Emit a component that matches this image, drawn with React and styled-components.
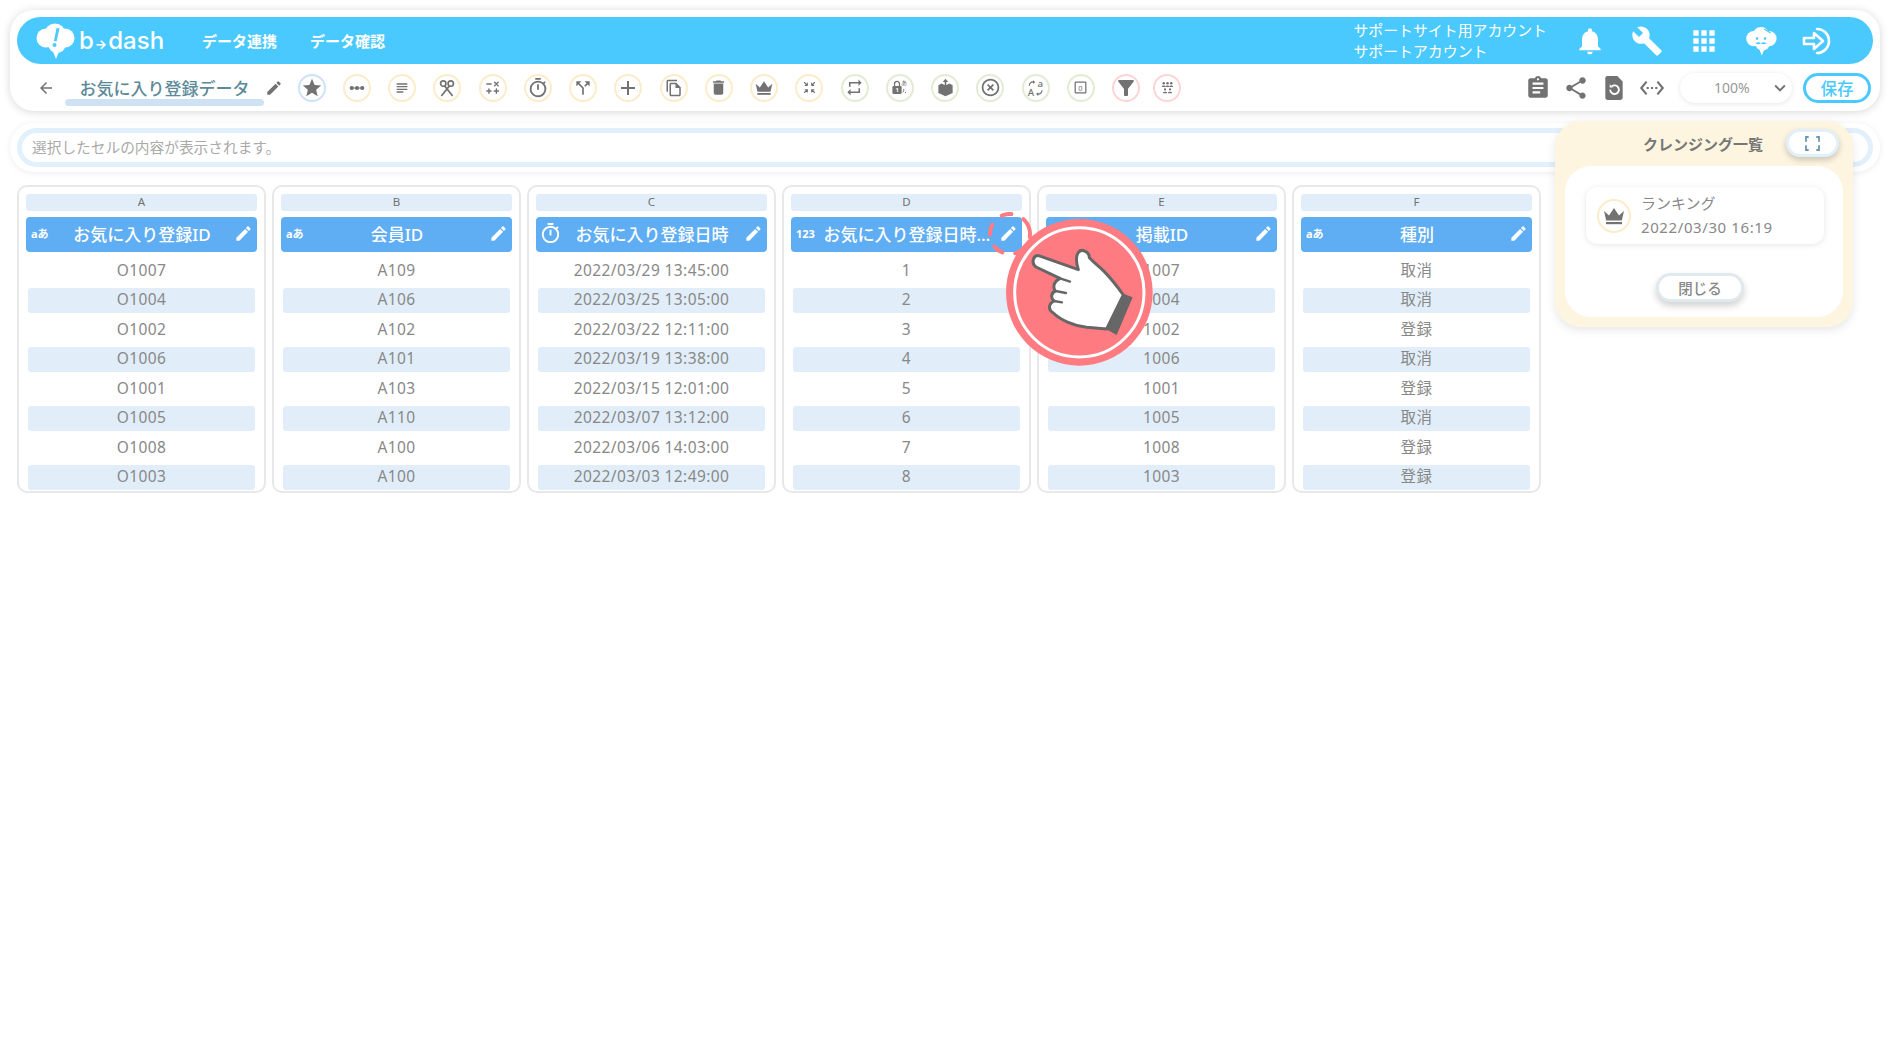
import React from 'react';
import styled, { createGlobalStyle } from 'styled-components';
import {
  MdAdd,
  MdApps,
  MdArrowBack,
  MdAssignment,
  MdBuild,
  MdCallSplit,
  MdDelete,
  MdEdit,
  MdExpandMore,
  MdFilterAlt,
  MdHighlightOff,
  MdNotifications,
  MdOutlineFileCopy,
  MdOutlineTimer,
  MdRepeat,
  MdSettingsEthernet,
  MdShare,
  MdStar,
  MdSubject,
} from 'react-icons/md';

const FONT = '"Noto Sans", "Noto Sans CJK JP", sans-serif';
const BLUE = '#4ac9ff';
const GREY = '#727272';
const RING = { blue: '#cfe2f3', yellow: '#fbeccb', green: '#e4ebd5', red: '#fcd5d5' };

const GlobalStyle = createGlobalStyle`
  html, body {
    margin: 0;
    padding: 0;
    background: #fff;
    font-family: ${FONT};
    overflow: hidden;
  }
`;

const Page = styled.div`
  position: relative;
  box-sizing: border-box;
  height: 1063px;
  padding: 10px;
`;

const TopCard = styled.div`
  padding: 7px 7px 0;
  height: 94px;
  border-radius: 24px;
  background: #fff;
  box-shadow: 0 1px 8px rgba(0, 0, 0, 0.16);
`;

const Bar = styled.header`
  display: flex;
  align-items: center;
  height: 47px;
  padding: 0 0 0 18px;
  border-radius: 24px;
  background: ${BLUE};
  color: #fff;
`;

const Brand = styled.div`
  display: flex;
  align-items: center;
  gap: 4px;
  width: 167px;
`;

const BrandName = styled.span`
  font-family: Inter, sans-serif;
  font-size: 24px;
  font-weight: 500;
  line-height: 1;
  small {
    margin: 0 1px;
    font-size: 13px;
    font-weight: 700;
  }
`;

const NavLink = styled.a`
  margin-right: 33px;
  font-size: 15px;
  font-weight: 700;
  white-space: nowrap;
`;

const Account = styled.div`
  margin-left: auto;
  font-size: 14.9px;
  line-height: 21px;
  white-space: nowrap;
`;

const BarIcons = styled.div`
  display: flex;
  align-items: center;
  margin-left: 27px;
  margin-right: 39px;
  gap: 25px;
  font-size: 32px;
  line-height: 0;
`;

const Toolbar = styled.div`
  display: flex;
  align-items: center;
  height: 47px;
  padding-left: 20px;
`;

const BackLink = styled.span`
  display: flex;
  font-size: 18px;
  color: ${GREY};
`;

const TitleWrap = styled.div`
  position: relative;
  width: 199px;
  margin-left: 10px;
  text-align: center;
`;

const Title = styled.span`
  position: relative;
  font-size: 17px;
  font-weight: 500;
  color: #5d8a99;
`;

const TitleLine = styled.div`
  position: absolute;
  left: 0;
  right: 0;
  bottom: -6px;
  height: 7px;
  border-radius: 4px;
  background: #cfe2f3;
`;

const TitleEdit = styled.span`
  display: flex;
  margin: 0 14.5px 0 1px;
  font-size: 18px;
  color: ${GREY};
`;

const CircleRow = styled.div`
  display: flex;
  align-items: center;
  gap: 17.25px;
`;

const CircleIcon = styled.span`
  box-sizing: border-box;
  display: flex;
  align-items: center;
  justify-content: center;
  flex: none;
  width: 28px;
  height: 28px;
  margin-right: ${(p) => (p.$tight ? '-4px' : '0')};
  border: 2px solid ${(p) => RING[p.$ring]};
  border-radius: 50%;
  color: ${GREY};
  font-size: ${(p) => p.$size || 18}px;
`;

const ToolRight = styled.div`
  display: flex;
  align-items: center;
  margin-left: auto;
  padding-right: 2px;
  color: ${GREY};
`;

const ToolIcon = styled.span`
  display: flex;
  justify-content: center;
  width: 38px;
  font-size: ${(p) => p.$size || 26}px;
`;

const ZoomSelect = styled.div`
  display: flex;
  align-items: center;
  box-sizing: border-box;
  width: 112px;
  height: 30px;
  margin: 0 11px 0 9px;
  padding: 0 1px 0 34px;
  border-radius: 15px;
  background: #fff;
  box-shadow: 0 1px 5px rgba(0, 0, 0, 0.1);
  font-size: 14px;
  color: #999;
  svg {
    margin-left: auto;
    font-size: 22px;
    color: ${GREY};
  }
`;

const SaveButton = styled.button`
  width: 68px;
  height: 30px;
  padding: 0;
  border: 3px solid ${BLUE};
  border-radius: 15px;
  background: #fff;
  color: ${BLUE};
  font-family: ${FONT};
  font-size: 16.5px;
  font-weight: 500;
`;

const CellCard = styled.div`
  margin-top: 12px;
  padding: 5px 7px;
  border-radius: 24px;
  background: #fff;
  box-shadow: 0 1px 6px rgba(0, 0, 0, 0.08);
`;

const CellInput = styled.div`
  box-sizing: border-box;
  height: 39px;
  padding-left: 10px;
  border: 5px solid #e2f0fb;
  border-radius: 20px;
  font-size: 14.7px;
  line-height: 29px;
  color: #aaa;
`;

const Sheet = styled.div`
  display: grid;
  grid-template-columns: repeat(6, 249px);
  gap: 6px;
  margin: 13px 0 0 7px;
`;

const Column = styled.section`
  box-sizing: border-box;
  height: 308px;
  padding: 7px 7px 0;
  border: 2px solid #e8e8e8;
  border-radius: 10px;
`;

const Letter = styled.div`
  height: 17px;
  border-radius: 3px;
  background: #e1eef9;
  font-size: 11.5px;
  line-height: 15px;
  text-align: center;
  color: ${GREY};
`;

const ColumnHead = styled.div`
  display: flex;
  align-items: center;
  box-sizing: border-box;
  height: 35px;
  margin-top: 6px;
  padding: 0 5px 2px;
  border-radius: 4px;
  background: #5fadf3;
  color: #fff;
`;

const TypeMark = styled.span`
  flex: none;
  width: 24px;
  font-size: 11px;
  font-weight: 700;
  line-height: 1;
  svg {
    display: block;
    margin-left: -2px;
    font-size: 23px;
  }
`;

const HeadLabel = styled.span`
  flex: 1;
  min-width: 0;
  overflow: hidden;
  font-size: 17px;
  font-weight: 500;
  text-align: center;
  white-space: nowrap;
`;

const HeadEdit = styled.span`
  display: flex;
  flex: none;
  width: 24px;
  justify-content: flex-end;
  margin-right: -1px;
  font-size: 19px;
`;

const Rows = styled.div`
  display: flex;
  flex-direction: column;
  gap: 4.5px;
  margin: 6.5px 2px 0;
`;

const Row = styled.div`
  box-sizing: border-box;
  height: 25px;
  padding-bottom: 3px;
  border-radius: 3px;
  background: ${(p) => (p.$alt ? '#e1eef9' : 'transparent')};
  font-size: 15.5px;
  letter-spacing: 0.4px;
  line-height: 22px;
  text-align: center;
  color: #888;
`;

const Panel = styled.aside`
  position: absolute;
  top: 121px;
  left: 1555px;
  box-sizing: border-box;
  width: 298px;
  height: 206px;
  padding: 45px 10px 10px;
  border-radius: 26px;
  background: #fdf5e0;
  box-shadow: 0 3px 10px rgba(0, 0, 0, 0.1);
`;

const PanelTitle = styled.div`
  position: absolute;
  top: 12px;
  left: 88px;
  font-size: 15px;
  font-weight: 700;
  line-height: 22px;
  color: #777;
  white-space: nowrap;
`;

const ExpandButton = styled.span`
  position: absolute;
  top: 8px;
  right: 14px;
  display: flex;
  align-items: center;
  justify-content: center;
  box-sizing: border-box;
  width: 53px;
  height: 28px;
  border: 3px solid #e2f0fb;
  border-radius: 14px;
  background: #fff;
  box-shadow: 0 3px 6px rgba(0, 0, 0, 0.2);
`;

const PanelBody = styled.div`
  box-sizing: border-box;
  height: 151px;
  padding: 21px 19px 0 21px;
  border-radius: 26px;
  background: #fff;
`;

const CleansingItem = styled.div`
  display: flex;
  align-items: center;
  gap: 10px;
  box-sizing: border-box;
  height: 57px;
  padding-left: 11px;
  border-radius: 12px;
  background: #fff;
  box-shadow: 0 1px 6px rgba(0, 0, 0, 0.1);
`;

const CrownBadge = styled(CircleIcon)`
  width: 34px;
  height: 34px;
  font-size: 24px;
`;

const ItemText = styled.div`
  margin-top: -2px;
  font-size: 15px;
  line-height: 24px;
  color: #888;
  white-space: nowrap;
`;

const ItemDate = styled.span`
  letter-spacing: 0.6px;
`;

const CloseButton = styled.button`
  display: block;
  box-sizing: border-box;
  width: 88px;
  height: 29px;
  margin: 29px 0 0 70px;
  padding: 0;
  border: 3px solid #dfe9ee;
  border-radius: 15px;
  background: #fff;
  box-shadow: 0 4px 7px rgba(0, 0, 0, 0.18);
  font-family: ${FONT};
  font-size: 14.5px;
  font-weight: 500;
  color: #888;
`;

const HandOverlay = styled.svg`
  position: absolute;
  top: 219px;
  left: 1006px;
  width: 147px;
  height: 147px;
`;

const DashRing = styled.svg`
  position: absolute;
  top: 211px;
  left: 987px;
  width: 46px;
  height: 46px;
`;

const Svg = ({ children, fill = 'none', stroke = 'currentColor', sw = 2 }) => (
  <svg width="1em" height="1em" viewBox="0 0 24 24" fill={fill} stroke={stroke} strokeWidth={sw} strokeLinecap="round" strokeLinejoin="round">
    {children}
  </svg>
);

const Cloud = ({ width, height, face }) => (
  <svg width={width} height={height} viewBox="0 0 40 36">
    <g fill="#fff">
      <circle cx="11" cy="15" r="9.5" />
      <circle cx="20" cy="11" r="10.5" />
      <circle cx="30" cy="15" r="9.5" />
      <circle cx="22" cy="21" r="9" />
      <path d="M17 26l4 10 4-10z" />
    </g>
    {face ? (
      <g>
        <circle cx="15" cy="15" r="1.6" fill={BLUE} />
        <circle cx="25" cy="15" r="1.6" fill={BLUE} />
        <path d="M13 21q4-3 7 0 3-3 7 0-4 2-7 0-3 2-7 0z" fill={BLUE} />
        <path d="M24 3l8 5" stroke={BLUE} strokeWidth="1.4" />
      </g>
    ) : (
      <g fill={BLUE}>
        <path d="M21.5 5l3 .5-3 13-2.5-.4z" />
        <circle cx="19.5" cy="22" r="2" />
      </g>
    )}
  </svg>
);

const SignInIcon = () => (
  <svg width="32" height="32" viewBox="0 0 32 32" fill="none" stroke="#fff" strokeWidth="2.6" strokeLinejoin="round" strokeLinecap="round">
    <path d="M15 4a12 12 0 1 1 0 24" />
    <path d="M2 13h10V8l9 8-9 8v-5H2z" />
  </svg>
);

const RestoreDoc = () => (
  <svg width="1em" height="1em" viewBox="0 0 24 24">
    <path d="M6 1h9l5 5v15a2 2 0 0 1-2 2H6a2 2 0 0 1-2-2V3a2 2 0 0 1 2-2z" fill={GREY} />
    <path d="M8.5 13.5a4 4 0 1 0 1.4-3" fill="none" stroke="#fff" strokeWidth="1.7" />
    <path d="M8 8.5v3h3z" fill="#fff" />
  </svg>
);

const Crown = () => (
  <svg width="1em" height="1em" viewBox="0 0 24 24" fill="currentColor">
    <path d="M2 7l5 4.5L12 4l5 7.5L22 7l-2.2 9.5H4.2z" />
    <rect x="4" y="18" width="16" height="2.2" />
  </svg>
);

const CommitDots = () => (
  <Svg sw={1.6}>
    <path d="M4 12h16" />
    <g fill="currentColor">
      <circle cx="5" cy="12" r="2" />
      <circle cx="12" cy="12" r="2" />
      <circle cx="19" cy="12" r="2" />
    </g>
  </Svg>
);

const Scissors = () => (
  <Svg sw={2.2}>
    <circle cx="7" cy="6" r="3.6" />
    <circle cx="17" cy="6" r="3.6" />
    <path d="M9 9.5L19 22M15 9.5L5 22" />
  </Svg>
);

const CalcMarks = () => (
  <Svg sw={2}>
    <path d="M4 7h6M15 4.5l5 5M20 4.5l-5 5M4 17h6M7 14v6M14.5 17h6M17.5 14v6" />
  </Svg>
);

const CompressArrows = () => (
  <Svg sw={1.8}>
    <path d="M4 4l4.5 4.5M8.5 5v3.5H5M20 4l-4.5 4.5M15.5 5v3.5H19M4 20l4.5-4.5M8.5 19v-3.5H5M20 20l-4.5-4.5M15.5 19v-3.5H19" />
  </Svg>
);

const LockNumber = () => (
  <svg width="1em" height="1em" viewBox="0 0 24 24">
    <path d="M5 10V7a3.5 3.5 0 0 1 7 0v3" fill="none" stroke="currentColor" strokeWidth="1.8" />
    <rect x="2" y="10" width="13" height="11" rx="1.5" fill="currentColor" />
    <text x="8.5" y="19" textAnchor="middle" fontSize="8" fontWeight="700" fill="#fff">1</text>
    <text x="18.5" y="9" textAnchor="middle" fontSize="8" fill="currentColor">あ</text>
    <path d="M18 14v3l-2 2M21 18l-1 2" fill="none" stroke="currentColor" strokeWidth="1.3" />
  </svg>
);

const BoxUpload = () => (
  <svg width="1em" height="1em" viewBox="0 0 24 24" fill="currentColor">
    <path d="M3 9l4-2 5 2.5L17 7l4 2v10l-9 4-9-4z" />
    <path d="M12 1l3.5 4H13v6h-2V5H8.5z" />
  </svg>
);

const TranslateMark = () => (
  <svg width="1em" height="1em" viewBox="0 0 24 24" fill="currentColor">
    <text x="1" y="22" fontSize="13" fontWeight="500">A</text>
    <text x="14" y="11" fontSize="13" fontWeight="500">a</text>
    <path d="M3 9a5 5 0 0 1 6-5M14 20a5 5 0 0 0 6-5" fill="none" stroke="currentColor" strokeWidth="1.5" />
    <path d="M8 1.5l3 2.5-3 2.5zM15 17.5L12 20l3 2.5z" />
  </svg>
);

const BoxedZero = () => (
  <svg width="1em" height="1em" viewBox="0 0 24 24">
    <rect x="3.5" y="3.5" width="17" height="17" rx="1" fill="none" stroke="currentColor" strokeWidth="2" />
    <text x="12" y="17" textAnchor="middle" fontSize="12" fill="currentColor">0</text>
  </svg>
);

const PeopleGroup = () => (
  <svg width="1em" height="1em" viewBox="0 0 24 24" fill="currentColor">
    <circle cx="6" cy="5" r="2" />
    <circle cx="12" cy="5" r="2" />
    <circle cx="18" cy="5" r="2" />
    <path d="M3 11c0-3 6-3 6 0zM9 11c0-3 6-3 6 0zM15 11c0-3 6-3 6 0z" />
    <circle cx="8" cy="15" r="1.8" />
    <circle cx="16" cy="15" r="1.8" />
    <path d="M4.5 21c0-3 7-3 7 0zM12.5 21c0-3 7-3 7 0z" />
  </svg>
);

const ExpandCorners = () => (
  <svg width="15" height="15" viewBox="0 0 15 15" fill="none" stroke="#6a9aa8" strokeWidth="1.8" strokeLinecap="round">
    <path d="M1 5V1h2M12 1h2v4M14 10v4h-2M3 14H1v-4" />
  </svg>
);

const TOOLS = [
  [MdStar, 'blue', 22],
  [CommitDots, 'yellow', 18],
  [MdSubject, 'yellow', 16],
  [Scissors, 'yellow', 18],
  [CalcMarks, 'yellow', 17],
  [MdOutlineTimer, 'yellow', 22],
  [MdCallSplit, 'yellow', 20],
  [MdAdd, 'yellow', 24],
  [MdOutlineFileCopy, 'yellow', 18],
  [MdDelete, 'yellow', 19],
  [Crown, 'yellow', 20],
  [CompressArrows, 'yellow', 15],
  [MdRepeat, 'green', 19],
  [LockNumber, 'green', 17],
  [BoxUpload, 'green', 19],
  [MdHighlightOff, 'green', 21],
  [TranslateMark, 'green', 18],
  [BoxedZero, 'green', 15],
  [MdFilterAlt, 'red', 24],
  [PeopleGroup, 'red', 15],
];

const COLUMNS = [
  {
    letter: 'A',
    type: 'aあ',
    label: 'お気に入り登録ID',
    rows: ['O1007', 'O1004', 'O1002', 'O1006', 'O1001', 'O1005', 'O1008', 'O1003'],
  },
  {
    letter: 'B',
    type: 'aあ',
    label: '会員ID',
    rows: ['A109', 'A106', 'A102', 'A101', 'A103', 'A110', 'A100', 'A100'],
  },
  {
    letter: 'C',
    type: <MdOutlineTimer />,
    label: 'お気に入り登録日時',
    rows: [
      '2022/03/29 13:45:00',
      '2022/03/25 13:05:00',
      '2022/03/22 12:11:00',
      '2022/03/19 13:38:00',
      '2022/03/15 12:01:00',
      '2022/03/07 13:12:00',
      '2022/03/06 14:03:00',
      '2022/03/03 12:49:00',
    ],
  },
  {
    letter: 'D',
    type: '123',
    label: 'お気に入り登録日時…',
    rows: ['1', '2', '3', '4', '5', '6', '7', '8'],
  },
  {
    letter: 'E',
    type: '',
    label: '掲載ID',
    rows: ['1007', '1004', '1002', '1006', '1001', '1005', '1008', '1003'],
  },
  {
    letter: 'F',
    type: 'aあ',
    label: '種別',
    rows: ['取消', '取消', '登録', '取消', '登録', '取消', '登録', '登録'],
  },
];

const App = () => (
  <Page>
    <GlobalStyle />
    <TopCard>
      <Bar>
        <Brand>
          <Cloud width={40} height={36} />
          <BrandName>
            b<small>→</small>dash
          </BrandName>
        </Brand>
        <NavLink>データ連携</NavLink>
        <NavLink>データ確認</NavLink>
        <Account>
          サポートサイト用アカウント
          <br />
          サポートアカウント
        </Account>
        <BarIcons>
          <MdNotifications />
          <MdBuild />
          <MdApps />
          <Cloud width={32} height={32} face />
          <SignInIcon />
        </BarIcons>
      </Bar>
      <Toolbar>
        <BackLink>
          <MdArrowBack />
        </BackLink>
        <TitleWrap>
          <TitleLine />
          <Title>お気に入り登録データ</Title>
        </TitleWrap>
        <TitleEdit>
          <MdEdit />
        </TitleEdit>
        <CircleRow>
          {TOOLS.map(([Icon, ring, size], i) => (
            <CircleIcon key={i} $ring={ring} $size={size} $tight={i === 18}>
              <Icon />
            </CircleIcon>
          ))}
        </CircleRow>
        <ToolRight>
          <ToolIcon>
            <MdAssignment />
          </ToolIcon>
          <ToolIcon>
            <MdShare />
          </ToolIcon>
          <ToolIcon>
            <RestoreDoc />
          </ToolIcon>
          <ToolIcon>
            <MdSettingsEthernet />
          </ToolIcon>
          <ZoomSelect>
            100%
            <MdExpandMore />
          </ZoomSelect>
          <SaveButton>保存</SaveButton>
        </ToolRight>
      </Toolbar>
    </TopCard>

    <CellCard>
      <CellInput>選択したセルの内容が表示されます。</CellInput>
    </CellCard>

    <Sheet>
      {COLUMNS.map((col) => (
        <Column key={col.letter}>
          <Letter>{col.letter}</Letter>
          <ColumnHead>
            <TypeMark>{col.type}</TypeMark>
            <HeadLabel>{col.label}</HeadLabel>
            <HeadEdit>
              <MdEdit />
            </HeadEdit>
          </ColumnHead>
          <Rows>
            {col.rows.map((value, i) => (
              <Row key={i} $alt={i % 2 === 1}>
                {value}
              </Row>
            ))}
          </Rows>
        </Column>
      ))}
    </Sheet>

    <Panel>
      <PanelTitle>クレンジング一覧</PanelTitle>
      <ExpandButton>
        <ExpandCorners />
      </ExpandButton>
      <PanelBody>
        <CleansingItem>
          <CrownBadge $ring="yellow">
            <Crown />
          </CrownBadge>
          <ItemText>
            ランキング
            <br />
            <ItemDate>2022/03/30 16:19</ItemDate>
          </ItemText>
        </CleansingItem>
        <CloseButton>閉じる</CloseButton>
      </PanelBody>
    </Panel>

    <DashRing viewBox="0 0 46 46">
      <circle cx="23" cy="23" r="20" fill="none" stroke="#ff7b82" strokeWidth="4" strokeLinecap="round" strokeDasharray="10 13" transform="rotate(-20 23 23)" />
    </DashRing>
    <HandOverlay viewBox="138 90 441 441">
      <circle cx="358" cy="310" r="220" fill="#ff7b82" />
      <circle cx="358" cy="310" r="194" fill="none" stroke="#fff" strokeWidth="9" />
      <path
        d="M236 200C220 198 212 222 228 234L300 268C284 276 276 292 286 306C272 312 272 328 282 336C264 346 264 362 280 372C300 392 340 410 380 415L440 420L490 318C470 290 450 265 430 245C415 230 395 215 388 206C388 188 364 176 354 192C346 204 350 226 355 242Z"
        fill="#fff"
        stroke="#666"
        strokeWidth="9"
        strokeLinejoin="round"
      />
      <path d="M300 268L330 278M286 306L318 312M282 336L306 340" fill="none" stroke="#666" strokeWidth="7" strokeLinecap="round" />
      <path d="M490 314L518 325L470 438L438 420Z" fill="#666" />
    </HandOverlay>
  </Page>
);

export default App;
